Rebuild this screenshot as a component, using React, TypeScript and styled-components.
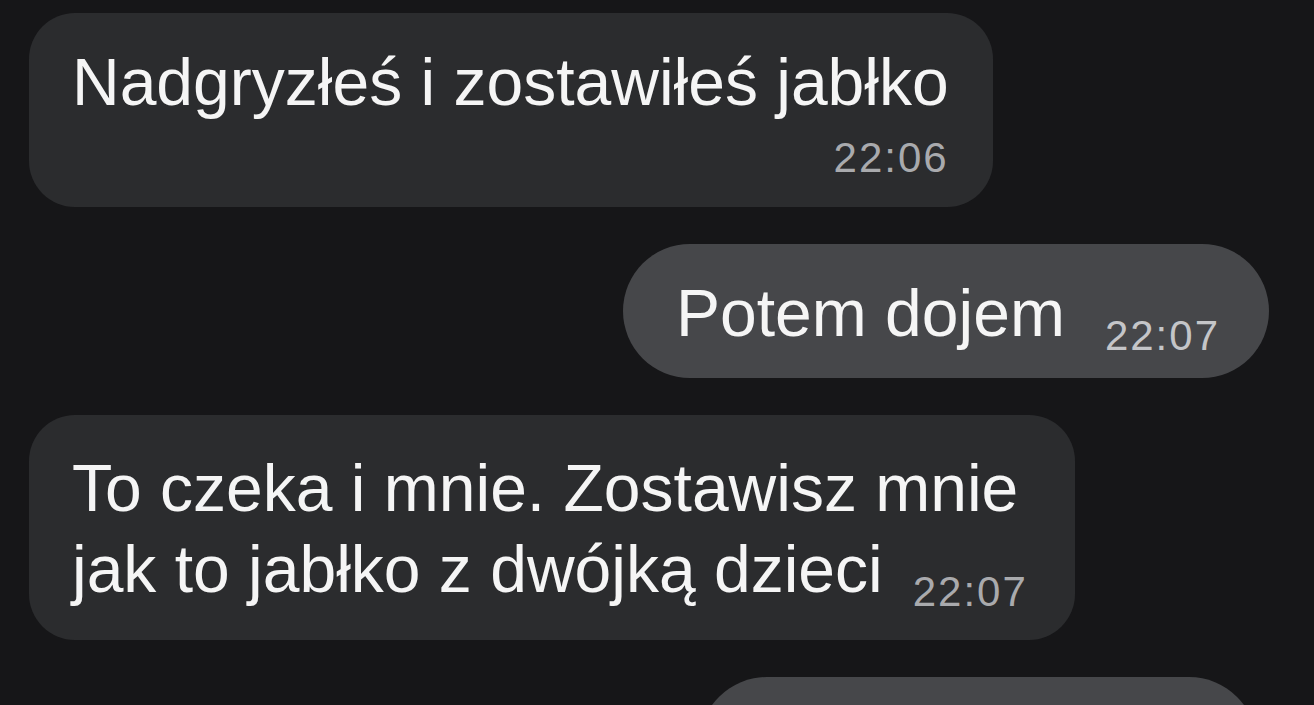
import React from "react";
import styled, { createGlobalStyle } from "styled-components";

const GlobalStyle = createGlobalStyle`
  html, body {
    margin: 0;
    padding: 0;
    background: #161618;
    overflow: hidden;
  }
  body {
    font-family: "Liberation Sans", Arial, sans-serif;
    -webkit-font-smoothing: antialiased;
  }
`;

const Screen = styled.div`
  width: 1314px;
  height: 705px;
  box-sizing: border-box;
  padding: 13px 45px 0 29px;
  display: flex;
  flex-direction: column;
  gap: 37px;
  background: #161618;
  overflow: hidden;
`;

const Row = styled.div<{ $out?: boolean }>`
  display: flex;
  justify-content: ${(p) => (p.$out ? "flex-end" : "flex-start")};
`;

const Bubble = styled.div<{ $out?: boolean; $multi?: boolean }>`
  box-sizing: border-box;
  display: flex;
  flex-direction: column;
  max-width: 1047px;
  background: ${(p) => (p.$out ? "#46474a" : "#2b2c2e")};
  border-radius: ${(p) => (p.$out ? "68px" : "46px")};
  padding: ${(p) => (p.$multi ? "33px" : "29px")}
    ${(p) => (p.$out ? "49px" : p.$multi ? "47px" : "44px")}
    ${(p) => (p.$multi ? "30px" : "25px")}
    ${(p) => (p.$out ? "53px" : "43px")};
  color: #f5f5f5;
  font-size: 66px;
  line-height: ${(p) => (p.$multi ? "81px" : "80px")};
`;

const TallBubble = styled(Bubble)`
  width: 558px;
  height: 140px;
  margin-right: 12px;
`;

const Line = styled.div`
  display: flex;
  align-items: baseline;
  white-space: nowrap;
`;

const Text = styled.span``;

const Time = styled.span<{ $out?: boolean; $gap?: number; $stacked?: boolean }>`
  display: block;
  white-space: nowrap;
  align-self: ${(p) => (p.$stacked ? "flex-end" : "auto")};
  margin-left: ${(p) => (p.$stacked ? 0 : p.$gap ?? 36)}px;
  margin-top: ${(p) => (p.$stacked ? "12px" : "0")};
  font-size: 42px;
  letter-spacing: 2px;
  line-height: ${(p) => (p.$stacked ? "48px" : "30px")};
  transform: ${(p) => (p.$stacked ? "none" : "translateY(14px)")};
  color: ${(p) => (p.$out ? "#c4c5c8" : "#a9aaad")};
`;

type Msg = {
  lines: string[];
  time: string;
  out?: boolean;
  stacked?: boolean;
  gap?: number;
};

const messages: Msg[] = [
  { lines: ["Nadgryzłeś i zostawiłeś jabłko"], time: "22:06", stacked: true },
  { lines: ["Potem dojem"], time: "22:07", out: true, gap: 40 },
  {
    lines: ["To czeka i mnie. Zostawisz mnie", "jak to jabłko z dwójką dzieci"],
    time: "22:07",
    gap: 30,
  },
];

export default function App() {
  return (
    <>
      <GlobalStyle />
      <Screen>
        {messages.map((m, i) => (
          <Row key={i} $out={m.out}>
            <Bubble $out={m.out} $multi={m.lines.length > 1}>
              {m.lines.map((l, j) => {
                const last = j === m.lines.length - 1;
                return (
                  <Line key={j}>
                    <Text>{l}</Text>
                    {last && !m.stacked && (
                      <Time $out={m.out} $gap={m.gap}>
                        {m.time}
                      </Time>
                    )}
                  </Line>
                );
              })}
              {m.stacked && (
                <Time $out={m.out} $stacked>
                  {m.time}
                </Time>
              )}
            </Bubble>
          </Row>
        ))}
        <Row $out>
          <TallBubble $out />
        </Row>
      </Screen>
    </>
  );
}
